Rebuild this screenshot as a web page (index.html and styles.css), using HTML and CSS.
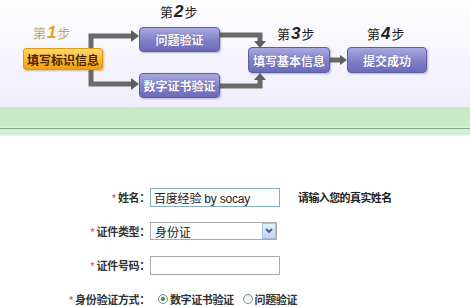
FILE: index.html
```html
<!DOCTYPE html>
<html lang="zh-CN">
<head>
    <meta charset="UTF-8">
    <title>填写标识信息</title>
    <link rel="stylesheet" href="styles.css">
</head>
<body>
    <div class="top">
        <div class="flow">
            <svg class="links" width="470" height="107" viewBox="0 0 470 107">
                <g fill="none" stroke="#6a6a6a" stroke-width="5">
                    <path d="M91 48 V36 H133"/>
                    <path d="M91 70 V84 H133"/>
                    <path d="M220 35 H260 V42"/>
                    <path d="M220 86 H260 V79"/>
                    <path d="M330 60 H341"/>
                </g>
                <g fill="#5e5e5e">
                    <polygon points="131,30 139,36 131,42"/>
                    <polygon points="131,78 139,84 131,90"/>
                    <polygon points="254,41 260,48 266,41"/>
                    <polygon points="254,80 260,73 266,80"/>
                    <polygon points="340,55 347,60 340,65"/>
                </g>
            </svg>

            <div class="step-title first t1">第<b>1</b>步</div>
            <div class="step-title t2">第<b>2</b>步</div>
            <div class="step-title t3">第<b>3</b>步</div>
            <div class="step-title t4">第<b>4</b>步</div>

            <div class="node current n1">填写标识信息</div>
            <div class="node n2">问题验证</div>
            <div class="node n2b">数字证书验证</div>
            <div class="node n3">填写基本信息</div>
            <div class="node n4">提交成功</div>
        </div>
    </div>

    <div class="band"></div>

    <form class="form">
        <div class="row">
            <label class="label"><span class="req">*</span> 姓名：</label>
            <div class="field">
                <input class="text focus" type="text" value="百度经验 by socay">
                <span class="hint">请输入您的真实姓名</span>
            </div>
        </div>
        <div class="row">
            <label class="label"><span class="req">*</span> 证件类型：</label>
            <div class="field">
                <div class="select">
                    <span class="select-value">身份证</span>
                    <span class="select-btn">
                        <svg width="8" height="6" viewBox="0 0 8 6"><path d="M1 1 L4 4 L7 1" fill="none" stroke="#3d5c99" stroke-width="1.8"/></svg>
                    </span>
                </div>
            </div>
        </div>
        <div class="row">
            <label class="label"><span class="req">*</span> 证件号码：</label>
            <div class="field">
                <input class="text" type="text" value="">
            </div>
        </div>
        <div class="row">
            <label class="label"><span class="req">*</span> 身份验证方式：</label>
            <div class="field options">
                <span class="option"><span class="radio checked"></span>数字证书验证</span>
                <span class="option"><span class="radio"></span>问题验证</span>
            </div>
        </div>
    </form>
</body>
</html>
```

FILE: styles.css
```css
/* General */
body {
    margin: 0;
    width: 470px;
    height: 306px;
    overflow: hidden;
    background: #fff;
    font-family: "Liberation Sans", "Noto Sans CJK SC", sans-serif;
    color: #333;
}

/* Step diagram */
.top {
    height: 107px;
    background: linear-gradient(to bottom, #fefeff, #efedfb);
}
.flow {
    position: relative;
    height: 107px;
}
.links {
    position: absolute;
    left: 0;
    top: 0;
}
.step-title {
    position: absolute;
    font-family: "Noto Sans CJK SC", serif;
    font-size: 13px;
    line-height: 16px;
    color: #222;
    white-space: nowrap;
}
.step-title b {
    font-family: "Liberation Sans", sans-serif;
    font-style: italic;
    font-weight: bold;
    font-size: 17px;
    padding: 0 1px;
}
.step-title.first {
    color: #c9a55a;
}
.step-title.first b {
    color: #e8a020;
}
.t1 { left: 33px; top: 25px; }
.t2 { left: 160px; top: 4px; }
.t3 { left: 277px; top: 26px; }
.t4 { left: 367px; top: 26px; }

.node {
    position: absolute;
    box-sizing: border-box;
    display: flex;
    align-items: center;
    justify-content: center;
    font-family: "Noto Sans CJK SC", sans-serif;
    font-size: 12px;
    font-weight: bold;
    color: #fff;
    text-shadow: 0 0 1px #4a4890;
    background: linear-gradient(to bottom, #a9a9e0, #8080c8 55%, #6c6ab8);
    border: 1px solid #5e5ca6;
    border-radius: 4px;
    box-shadow: 1px 1px 2px rgba(60, 60, 110, 0.35);
    white-space: nowrap;
}
.node.current {
    color: #4a2500;
    text-shadow: none;
    background: linear-gradient(to bottom, #ffd870, #fbb830 55%, #f0a010);
    border-color: #e39a10;
    border-radius: 3px;
    box-shadow: 1px 1px 2px rgba(150, 100, 20, 0.4);
}
.n1 { left: 23px; top: 48px; width: 80px; height: 22px; }
.n2 { left: 139px; top: 27px; width: 81px; height: 25px; }
.n2b { left: 139px; top: 73px; width: 81px; height: 25px; }
.n3 { left: 248px; top: 47px; width: 82px; height: 26px; }
.n4 { left: 347px; top: 47px; width: 80px; height: 26px; }

/* Green band */
.band {
    height: 29px;
    background: linear-gradient(to bottom,
        #c7ebc7 0, #c7ebc7 19px,
        #d3efd3 19px, #d3efd3 21px,
        #86a686 21px, #86a686 22px,
        #d5eed5 22px, #d5eed5 28px,
        #eef8ee 28px);
}

/* Form */
.form {
    padding-top: 44px;
}
.row {
    display: grid;
    grid-template-columns: 150px auto;
    align-items: center;
    height: 34px;
}
.label {
    text-align: right;
    font-family: "Noto Sans CJK SC", sans-serif;
    font-size: 11px;
    font-weight: bold;
    color: #333;
    white-space: nowrap;
    letter-spacing: -0.3px;
}
.req {
    color: #e04040;
    font-weight: normal;
    font-family: "Liberation Sans", sans-serif;
}
.field {
    display: flex;
    align-items: center;
}
.text {
    box-sizing: border-box;
    width: 130px;
    height: 19px;
    margin: 0;
    padding: 0 3px;
    border: 1px solid #a9a9a9;
    font-family: "Liberation Sans", "Noto Sans CJK SC", sans-serif;
    font-size: 12px;
    letter-spacing: -0.2px;
    color: #222;
    background: #fff;
}
.text.focus {
    border-color: #7eb0c2;
}
.hint {
    margin-left: 18px;
    font-family: "Noto Sans CJK SC", sans-serif;
    font-size: 11px;
    font-weight: bold;
    letter-spacing: -0.6px;
    color: #222;
}
.select {
    box-sizing: border-box;
    width: 127px;
    height: 18px;
    border: 1px solid #a5acb4;
    display: flex;
    align-items: center;
    justify-content: space-between;
    background: #fff;
}
.select-value {
    padding-left: 4px;
    font-family: "Noto Sans CJK SC", sans-serif;
    font-size: 12px;
    color: #222;
}
.select-btn {
    box-sizing: border-box;
    width: 14px;
    height: 16px;
    display: flex;
    align-items: center;
    justify-content: center;
    border: 1px solid #a8bedf;
    background: linear-gradient(to bottom, #e6eefb, #c4d5f2);
}
.options {
    padding-left: 8px;
    gap: 9px;
}
.option {
    display: flex;
    align-items: center;
    gap: 2px;
    font-family: "Noto Sans CJK SC", sans-serif;
    font-size: 11px;
    font-weight: bold;
    letter-spacing: -0.4px;
    color: #333;
}
.radio {
    box-sizing: border-box;
    width: 10px;
    height: 10px;
    border: 1px solid #7c8c9c;
    border-radius: 50%;
    background: linear-gradient(to bottom, #e8ecf0, #fff);
    display: flex;
    align-items: center;
    justify-content: center;
}
.radio.checked::after {
    content: "";
    width: 4px;
    height: 4px;
    border-radius: 50%;
    background: #3a8f3a;
}
```
